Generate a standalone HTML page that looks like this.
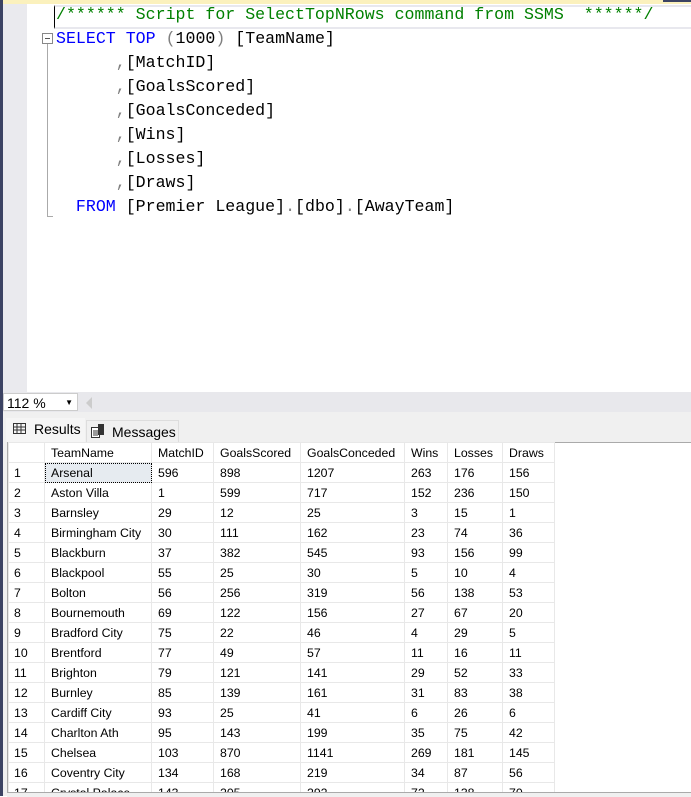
<!DOCTYPE html>
<html><head><style>
body{margin:0;width:691px;height:796px;overflow:hidden;background:#fff;position:relative;font-family:"Liberation Sans",sans-serif}
.abs{position:absolute}
.code{position:absolute;left:56px;font-family:"Liberation Mono",monospace;font-size:16.6px;white-space:pre;line-height:24px;color:#000}
.k{color:#0000ff}.c{color:#008000}.g{color:#808080}.m{color:#ff00ff}
table{border-collapse:collapse;font-size:12.3px;color:#000}
td{height:19px;border:1px solid #e8e8e8;padding:0 0 0 6px;white-space:nowrap}
tr.h td{color:#000}
td:first-child{padding-left:5px}
</style></head><body>
<div class="abs" style="left:0;top:0;width:3px;height:796px;background:#3c4363"></div>
<div class="abs" style="left:3px;top:0;width:24px;height:392px;background:#eaeaee"></div>
<div class="abs" style="left:3px;top:0;width:688px;height:4px;background:#fbf1bd"></div>
<div class="abs" style="left:663px;top:0;width:28px;height:2px;background:#3c4363"></div>
<div class="abs" style="left:54px;top:5px;width:637px;height:20px;border-top:2px solid #e8e8ee;border-bottom:2px solid #e8e8ee;border-left:1px solid #000"></div>
<div class="abs" style="left:42px;top:33px;width:9px;height:9px;border:1px solid #888;background:#fff"></div>
<div class="abs" style="left:45px;top:38px;width:5px;height:1px;background:#555"></div>
<div class="abs" style="left:47px;top:44px;width:1px;height:173px;background:#aaa"></div>
<div class="abs" style="left:47px;top:216px;width:6px;height:1px;background:#aaa"></div>
<div class="code" style="top:3px"><span class="c">/****** Script for SelectTopNRows command from SSMS  ******/</span>
<span class="k">SELECT</span> <span class="k">TOP</span> <span class="g">(</span>1000<span class="g">)</span> [TeamName]
      <span class="g">,</span>[MatchID]
      <span class="g">,</span>[GoalsScored]
      <span class="g">,</span>[GoalsConceded]
      <span class="g">,</span>[Wins]
      <span class="g">,</span>[Losses]
      <span class="g">,</span>[Draws]
  <span class="k">FROM</span> [Premier League]<span class="g">.</span>[dbo]<span class="g">.</span>[AwayTeam]</div>
<div class="abs" style="left:3px;top:392px;width:688px;height:20px;background:#e8e8ec"></div>
<div class="abs" style="left:3px;top:393px;width:74px;height:18px;background:#fff;border:1px solid #ccc;font-size:14px;line-height:18px;padding-left:3px;box-sizing:border-box;width:75px">112 %<span style="position:absolute;right:4px;top:0;font-size:8px">▼</span></div>
<div class="abs" style="left:86px;top:397px;width:0;height:0;border-top:6px solid transparent;border-bottom:6px solid transparent;border-right:6px solid #ccc"></div>
<div class="abs" style="left:3px;top:412px;width:688px;height:384px;background:#f0f0f0"></div>
<div class="abs" style="left:6px;top:418px;width:79px;height:24px;background:#f5f5f5;font-size:14px;line-height:22px;padding-left:28px;box-sizing:border-box">Results</div>
<svg class="abs" style="left:13px;top:423px" width="13" height="11"><rect x="0.5" y="0.5" width="12" height="10" fill="none" stroke="#333"/><path d="M0 4h13M0 7h13M4 0v11M8 0v11" stroke="#333"/></svg>
<div class="abs" style="left:86px;top:420px;width:93px;height:22px;background:#f0f0f0;border:1px solid #ddd;border-bottom:none;font-size:14px;line-height:22px;padding-left:25px;box-sizing:border-box">Messages</div>
<svg class="abs" style="left:91px;top:424px" width="14" height="14"><rect x="0.5" y="3.5" width="8" height="10" fill="#fff" stroke="#333"/><rect x="7" y="0" width="6" height="11" fill="#333"/><path d="M2 7h5M2 9h5M2 11h5" stroke="#333"/></svg>
<div class="abs" style="left:7px;top:442px;width:684px;height:354px;background:#fff;border-top:1px solid #aaa;border-left:1px solid #aaa;box-sizing:border-box"></div>
<div class="abs" style="left:8px;top:442px;width:683px;height:350px;overflow:hidden">
<table>
<colgroup><col style="width:36px"><col style="width:107px"><col style="width:62px"><col style="width:87px"><col style="width:104px"><col style="width:43px"><col style="width:55px"><col style="width:52px"></colgroup>
<tr class="h"><td></td><td>TeamName</td><td>MatchID</td><td>GoalsScored</td><td>GoalsConceded</td><td>Wins</td><td>Losses</td><td>Draws</td></tr>
<tr><td>1</td><td style="background:#e6ebf0;outline:1px dotted #000;outline-offset:-1px">Arsenal</td><td>596</td><td>898</td><td>1207</td><td>263</td><td>176</td><td>156</td></tr>
<tr><td>2</td><td>Aston Villa</td><td>1</td><td>599</td><td>717</td><td>152</td><td>236</td><td>150</td></tr>
<tr><td>3</td><td>Barnsley</td><td>29</td><td>12</td><td>25</td><td>3</td><td>15</td><td>1</td></tr>
<tr><td>4</td><td>Birmingham City</td><td>30</td><td>111</td><td>162</td><td>23</td><td>74</td><td>36</td></tr>
<tr><td>5</td><td>Blackburn</td><td>37</td><td>382</td><td>545</td><td>93</td><td>156</td><td>99</td></tr>
<tr><td>6</td><td>Blackpool</td><td>55</td><td>25</td><td>30</td><td>5</td><td>10</td><td>4</td></tr>
<tr><td>7</td><td>Bolton</td><td>56</td><td>256</td><td>319</td><td>56</td><td>138</td><td>53</td></tr>
<tr><td>8</td><td>Bournemouth</td><td>69</td><td>122</td><td>156</td><td>27</td><td>67</td><td>20</td></tr>
<tr><td>9</td><td>Bradford City</td><td>75</td><td>22</td><td>46</td><td>4</td><td>29</td><td>5</td></tr>
<tr><td>10</td><td>Brentford</td><td>77</td><td>49</td><td>57</td><td>11</td><td>16</td><td>11</td></tr>
<tr><td>11</td><td>Brighton</td><td>79</td><td>121</td><td>141</td><td>29</td><td>52</td><td>33</td></tr>
<tr><td>12</td><td>Burnley</td><td>85</td><td>139</td><td>161</td><td>31</td><td>83</td><td>38</td></tr>
<tr><td>13</td><td>Cardiff City</td><td>93</td><td>25</td><td>41</td><td>6</td><td>26</td><td>6</td></tr>
<tr><td>14</td><td>Charlton Ath</td><td>95</td><td>143</td><td>199</td><td>35</td><td>75</td><td>42</td></tr>
<tr><td>15</td><td>Chelsea</td><td>103</td><td>870</td><td>1141</td><td>269</td><td>181</td><td>145</td></tr>
<tr><td>16</td><td>Coventry City</td><td>134</td><td>168</td><td>219</td><td>34</td><td>87</td><td>56</td></tr>
<tr><td>17</td><td>Crystal Palace</td><td>143</td><td>205</td><td>292</td><td>72</td><td>138</td><td>70</td></tr>
</table></div>
<div class="abs" style="left:7px;top:792px;width:684px;height:4px;background:#f0f0f0;border-top:1px solid #aaa"></div>
</body></html>
